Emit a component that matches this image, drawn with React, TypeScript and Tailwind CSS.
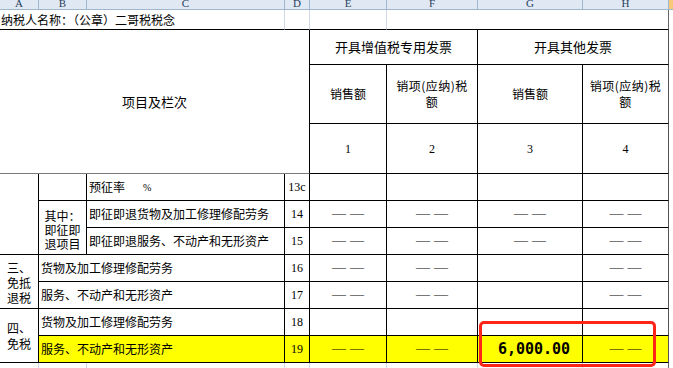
import React from 'react';

const cjk = "font-['Noto_Sans_CJK_SC','Liberation_Sans',sans-serif]";

function Dash() {
  return (
    <span className="flex items-center gap-[4px] font-['Liberation_Serif',serif] text-[14px] leading-[14px]">
      <span>—</span>
      <span>—</span>
    </span>
  );
}

function Num({ children }: { children: React.ReactNode }) {
  return <span className="font-['Liberation_Serif',serif] text-[12px]">{children}</span>;
}

const letters = ['A', 'B', 'C', 'D', 'E', 'F', 'G', 'H'];

export default function App() {
  return (
    <div className={`relative h-[368px] w-[673px] overflow-hidden bg-white text-black ${cjk}`}>
      {/* column letters, top half cut off */}
      <div className="grid h-[10px] grid-cols-[39px_48px_198px_25px_77px_91px_105px_86px_4px] overflow-hidden">
        {letters.map((l) => (
          <div
            key={l}
            className="flex items-end justify-center overflow-hidden border-r border-b border-[#9eb6ce] bg-[#e0e8f3] font-['Liberation_Serif',serif] text-[11px] leading-[11px] text-[#27415e]"
          >
            {l}
          </div>
        ))}
        <div className="border-b border-[#9eb6ce] bg-[#f6c978]" />
      </div>

      {/* sheet body */}
      <div className="grid grid-cols-[39px_48px_198px_25px_77px_91px_105px_86px_4px] grid-rows-[20px_35px_59px_50px_27px_27px_27px_27px_27px_27px_27px_5px] text-[12px]">
        {/* title row */}
        <div className="col-span-3 col-start-1 row-start-1 flex items-center whitespace-nowrap border-r border-b border-r-[#d0d7e5] border-b-black pl-[1px]">
          纳税人名称：（公章）二哥税税念
        </div>
        <div className="col-start-4 row-start-1 border-r border-b border-r-[#d0d7e5] border-b-black" />
        <div className="col-start-5 row-start-1 border-r border-b border-r-[#d0d7e5] border-b-black" />
        <div className="col-span-3 col-start-6 row-start-1 border-r border-b border-r-[#666] border-b-black" />

        {/* header */}
        <div className="col-span-4 col-start-1 row-span-3 row-start-2 flex items-center justify-center border-r border-b border-r-black border-b-[#7a7a7a] text-[13px]">
          项目及栏次
        </div>
        <div className="col-span-2 col-start-5 row-start-2 flex items-center justify-center border-r border-b border-black text-[13px]">
          开具增值税专用发票
        </div>
        <div className="col-span-2 col-start-7 row-start-2 flex items-center justify-center border-r border-b border-black border-r-[#555] text-[13px]">
          开具其他发票
        </div>

        <div className="col-start-5 row-start-3 flex items-center justify-center border-r border-b border-black">销售额</div>
        <div className="col-start-6 row-start-3 flex items-center justify-center border-r border-b border-black text-center leading-[16px] tracking-[0.5px]">
          销项(应纳)税<br />额
        </div>
        <div className="col-start-7 row-start-3 flex items-center justify-center border-r border-b border-black">销售额</div>
        <div className="col-start-8 row-start-3 flex items-center justify-center border-r border-b border-black border-r-[#555] text-center leading-[16px] tracking-[0.5px]">
          销项(应纳)税<br />额
        </div>

        <div className="col-start-5 row-start-4 flex items-center justify-center border-r border-b border-black"><Num>1</Num></div>
        <div className="col-start-6 row-start-4 flex items-center justify-center border-r border-b border-black"><Num>2</Num></div>
        <div className="col-start-7 row-start-4 flex items-center justify-center border-r border-b border-black"><Num>3</Num></div>
        <div className="col-start-8 row-start-4 flex items-center justify-center border-r border-b border-black border-r-[#555]"><Num>4</Num></div>

        {/* 13c */}
        <div className="col-start-1 row-span-3 row-start-5 border-r border-b border-black" />
        <div className="col-start-2 row-start-5 border-r border-b border-black" />
        <div className="col-start-3 row-start-5 flex items-center border-r border-b border-black pl-[2px]">
          预征率<span className="ml-[18px] font-['Liberation_Serif',serif] text-[10px]">%</span>
        </div>
        <div className="col-start-4 row-start-5 flex items-center justify-center border-r border-b border-black"><Num>13c</Num></div>
        <div className="col-start-5 row-start-5 border-r border-b border-black" />
        <div className="col-start-6 row-start-5 border-r border-b border-black" />
        <div className="col-start-7 row-start-5 border-r border-b border-black" />
        <div className="col-start-8 row-start-5 border-r border-b border-black border-r-[#555]" />

        {/* 14 */}
        <div className="col-start-2 row-span-2 row-start-6 flex items-center justify-center border-r border-b border-black pt-[5px] text-center leading-[14px]">
          其中：<br />即征即<br />退项目
        </div>
        <div className="col-start-3 row-start-6 flex items-center border-r border-b border-black pl-[2px]">即征即退货物及加工修理修配劳务</div>
        <div className="col-start-4 row-start-6 flex items-center justify-center border-r border-b border-black"><Num>14</Num></div>
        <div className="col-start-5 row-start-6 flex items-center justify-center border-r border-b border-black"><Dash /></div>
        <div className="col-start-6 row-start-6 flex items-center justify-center border-r border-b border-black"><Dash /></div>
        <div className="col-start-7 row-start-6 flex items-center justify-center border-r border-b border-black"><Dash /></div>
        <div className="col-start-8 row-start-6 flex items-center justify-center border-r border-b border-black border-r-[#555]"><Dash /></div>

        {/* 15 */}
        <div className="col-start-3 row-start-7 flex items-center border-r border-b border-black pl-[2px]">即征即退服务、不动产和无形资产</div>
        <div className="col-start-4 row-start-7 flex items-center justify-center border-r border-b border-black"><Num>15</Num></div>
        <div className="col-start-5 row-start-7 flex items-center justify-center border-r border-b border-black"><Dash /></div>
        <div className="col-start-6 row-start-7 flex items-center justify-center border-r border-b border-black"><Dash /></div>
        <div className="col-start-7 row-start-7 flex items-center justify-center border-r border-b border-black"><Dash /></div>
        <div className="col-start-8 row-start-7 flex items-center justify-center border-r border-b border-black border-r-[#555]"><Dash /></div>

        {/* 16 / 17 */}
        <div className="col-start-1 row-span-2 row-start-8 flex items-center justify-center border-r border-b border-black pt-[2px] text-center leading-[15px]">
          三、<br />免抵<br />退税
        </div>
        <div className="col-span-2 col-start-2 row-start-8 flex items-center border-r border-b border-black pl-[2px]">货物及加工修理修配劳务</div>
        <div className="col-start-4 row-start-8 flex items-center justify-center border-r border-b border-black"><Num>16</Num></div>
        <div className="col-start-5 row-start-8 flex items-center justify-center border-r border-b border-black"><Dash /></div>
        <div className="col-start-6 row-start-8 flex items-center justify-center border-r border-b border-black"><Dash /></div>
        <div className="col-start-7 row-start-8 border-r border-b border-black" />
        <div className="col-start-8 row-start-8 flex items-center justify-center border-r border-b border-black border-r-[#555]"><Dash /></div>

        <div className="col-span-2 col-start-2 row-start-9 flex items-center border-r border-b border-black pl-[2px]">服务、不动产和无形资产</div>
        <div className="col-start-4 row-start-9 flex items-center justify-center border-r border-b border-black"><Num>17</Num></div>
        <div className="col-start-5 row-start-9 flex items-center justify-center border-r border-b border-black"><Dash /></div>
        <div className="col-start-6 row-start-9 flex items-center justify-center border-r border-b border-black"><Dash /></div>
        <div className="col-start-7 row-start-9 border-r border-b border-black" />
        <div className="col-start-8 row-start-9 flex items-center justify-center border-r border-b border-black border-r-[#555]"><Dash /></div>

        {/* 18 / 19 */}
        <div className="col-start-1 row-span-2 row-start-10 flex items-center justify-center border-r border-b border-black text-center leading-[16px]">
          四、<br />免税
        </div>
        <div className="col-span-2 col-start-2 row-start-10 flex items-center border-r border-b border-black pl-[2px]">货物及加工修理修配劳务</div>
        <div className="col-start-4 row-start-10 flex items-center justify-center border-r border-b border-black"><Num>18</Num></div>
        <div className="col-start-5 row-start-10 border-r border-b border-black" />
        <div className="col-start-6 row-start-10 border-r border-b border-black" />
        <div className="col-start-7 row-start-10 border-r border-b border-black" />
        <div className="col-start-8 row-start-10 border-r border-b border-black border-r-[#555]" />

        <div className="col-span-2 col-start-2 row-start-11 flex items-center border-r border-b border-black bg-[#ffff00] pl-[2px]">服务、不动产和无形资产</div>
        <div className="col-start-4 row-start-11 flex items-center justify-center border-r border-b border-black bg-[#ffff00]"><Num>19</Num></div>
        <div className="col-start-5 row-start-11 flex items-center justify-center border-r border-b border-black bg-[#ffff00]"><Dash /></div>
        <div className="col-start-6 row-start-11 flex items-center justify-center border-r border-b border-black bg-[#ffff00]"><Dash /></div>
        <div className="col-start-7 row-start-11 flex items-center justify-center border-r border-b border-black bg-[#ffff00] pl-[8px]">
          <span className="font-['DejaVu_Sans_Mono',monospace] text-[15px] font-bold">6,000.00</span>
        </div>
        <div className="col-start-8 row-start-11 flex items-center justify-center border-r border-b border-black border-r-[#555] bg-[#ffff00]"><Dash /></div>

        {/* next (empty) row, light gridlines */}
        <div className="col-start-1 row-start-12 border-r border-[#d0d7e5]" />
        <div className="col-start-2 row-start-12 border-r border-[#d0d7e5]" />
        <div className="col-start-3 row-start-12 border-r border-[#d0d7e5]" />
        <div className="col-start-4 row-start-12 border-r border-[#d0d7e5]" />
        <div className="col-start-5 row-start-12 border-r border-[#d0d7e5]" />
        <div className="col-start-6 row-start-12 border-r border-[#d0d7e5]" />
        <div className="col-start-7 row-start-12 border-r border-[#d0d7e5]" />
        <div className="col-start-8 row-start-12 border-r border-[#666]" />
      </div>

      {/* red annotation box */}
      <div className="absolute left-[479px] top-[321px] h-[46px] w-[177px] rounded-[5px] border-[3px] border-[#ff2418]" />
    </div>
  );
}
